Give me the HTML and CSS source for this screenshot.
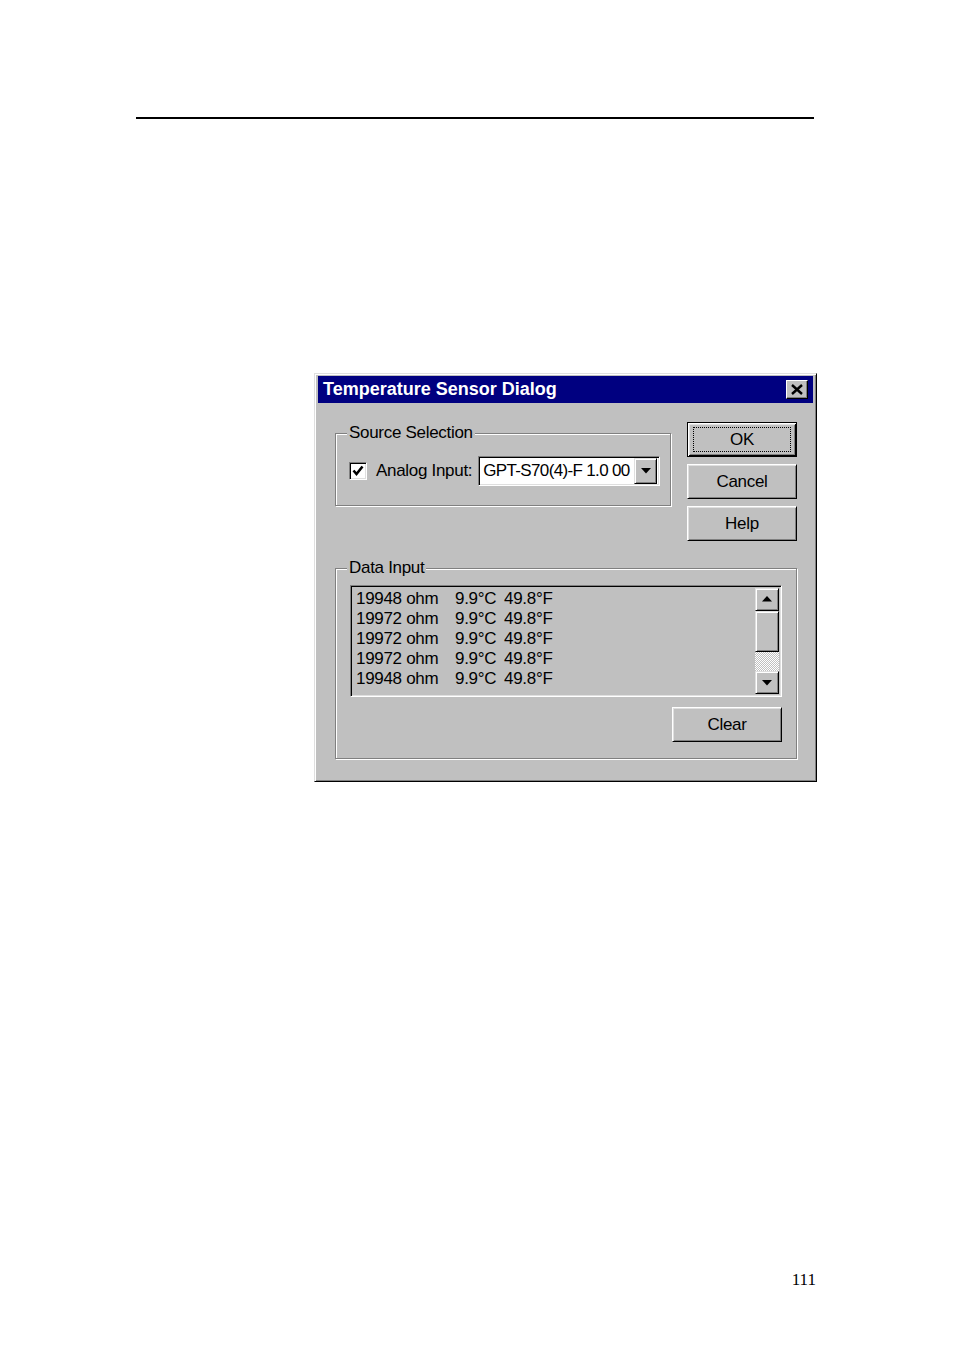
FILE: index.html
```html
<!DOCTYPE html>
<html>
<head>
<meta charset="utf-8">
<link rel="stylesheet" href="styles.css">
</head>
<body>
<div class="page">
  <div class="rule"></div>
  <div class="dialog">
    <div class="titlebar">
      <span class="title">Temperature Sensor Dialog</span>
      <span class="close"><svg width="12" height="11" viewBox="0 0 12 11"><path d="M1 1 L11 10 M11 1 L1 10" stroke="#000" stroke-width="2.4" fill="none"/></svg></span>
    </div>
    <div class="dlg-body">
      <div class="top-row">
        <fieldset class="group source">
          <legend>Source Selection</legend>
          <div class="src-row">
            <span class="checkbox"><svg width="14" height="14" viewBox="0 0 14 14"><path d="M2.5 6.5 L5.5 10 L11.5 2.5" stroke="#000" stroke-width="2.6" fill="none"/></svg></span>
            <span class="src-label">Analog Input:</span>
            <span class="combo">
              <span class="combo-text">GPT-S70(4)-F 1.0 00</span>
              <span class="combo-btn"><svg width="10" height="6" viewBox="0 0 10 6"><path d="M0 0 H10 L5 5.5 Z" fill="#000"/></svg></span>
            </span>
          </div>
        </fieldset>
        <div class="btn-col">
          <button class="btn default"><span class="focus">OK</span></button>
          <button class="btn">Cancel</button>
          <button class="btn">Help</button>
        </div>
      </div>
      <fieldset class="group data">
        <legend>Data Input</legend>
        <div class="listbox">
          <div class="rows">
            <div class="row"><span>19948 ohm</span><span>9.9°C</span><span>49.8°F</span></div>
            <div class="row"><span>19972 ohm</span><span>9.9°C</span><span>49.8°F</span></div>
            <div class="row"><span>19972 ohm</span><span>9.9°C</span><span>49.8°F</span></div>
            <div class="row"><span>19972 ohm</span><span>9.9°C</span><span>49.8°F</span></div>
            <div class="row"><span>19948 ohm</span><span>9.9°C</span><span>49.8°F</span></div>
          </div>
          <div class="scrollbar">
            <span class="sb-btn"><svg width="10" height="6" viewBox="0 0 10 6"><path d="M0 5.5 H10 L5 0 Z" fill="#000"/></svg></span>
            <span class="sb-thumb"></span>
            <span class="sb-track"></span>
            <span class="sb-btn"><svg width="10" height="6" viewBox="0 0 10 6"><path d="M0 0 H10 L5 5.5 Z" fill="#000"/></svg></span>
          </div>
        </div>
        <div class="clear-row">
          <button class="btn clear">Clear</button>
        </div>
      </fieldset>
    </div>
  </div>
  <div class="pagenum">111</div>
</div>
</body>
</html>
```

FILE: styles.css
```css
html, body {
  margin: 0;
  padding: 0;
  background: #fff;
}

.page {
  width: 954px;
  height: 1351px;
  overflow: hidden;
}

.rule {
  margin: 117px 0 0 136px;
  width: 678px;
  height: 2px;
  background: #000;
}

.dialog {
  box-sizing: border-box;
  margin: 254px 0 0 314px;
  width: 503px;
  height: 409px;
  background: #c0c0c0;
  border: 1px solid;
  border-color: #dfdfdf #000 #000 #dfdfdf;
  box-shadow: inset 1px 1px 0 #fff, inset -1px -1px 0 #808080;
  padding: 2px 3px 3px 3px;
  font-family: "Liberation Sans", Arial, sans-serif;
  font-size: 17px;
  letter-spacing: -0.3px;
  color: #000;
}

.titlebar {
  height: 27px;
  background: #000080;
  display: flex;
  align-items: center;
  justify-content: space-between;
  padding: 0 5px 0 5px;
}

.title {
  font-family: "Liberation Sans", Arial, sans-serif;
  font-weight: bold;
  font-size: 18px;
  color: #fff;
  letter-spacing: 0;
}

.close {
  box-sizing: border-box;
  width: 22px;
  height: 19px;
  background: #c0c0c0;
  border: 1px solid;
  border-color: #fff #000 #000 #fff;
  box-shadow: inset -1px -1px 0 #808080;
  display: flex;
  align-items: center;
  justify-content: center;
}

.dlg-body {
  padding: 19px 0 0 17px;
}

.top-row {
  display: flex;
  align-items: flex-start;
  gap: 16px;
}

.group {
  margin: 0;
  min-width: 0;
  border: 1px solid #808080;
  box-shadow: inset 1px 1px 0 #fff, 1px 1px 0 #fff;
}

.group legend {
  padding: 0 2px;
  line-height: 20px;
  background: #c0c0c0;
  position: relative;
}

.source {
  box-sizing: border-box;
  width: 336px;
  margin-top: 1px;
  padding: 13px 10px 19px 13px;
}

.source legend {
  margin-left: -2px;
}

.src-row {
  display: flex;
  align-items: center;
}

.checkbox {
  box-sizing: border-box;
  width: 18px;
  height: 18px;
  background: #fff;
  border: 1px solid;
  border-color: #808080 #fff #fff #808080;
  box-shadow: inset 1px 1px 0 #000, inset -1px -1px 0 #dfdfdf;
  display: flex;
  align-items: center;
  justify-content: center;
  margin-right: 9px;
}

.src-label {
  margin-right: 6px;
  white-space: nowrap;
}

.combo {
  box-sizing: border-box;
  width: 182px;
  height: 30px;
  background: #fff;
  border: 1px solid;
  border-color: #808080 #fff #fff #808080;
  box-shadow: inset 1px 1px 0 #000, inset -1px -1px 0 #dfdfdf;
  padding: 2px 2px 2px 4px;
  display: flex;
  align-items: center;
}

.combo-text {
  flex: 1;
  min-width: 0;
  white-space: nowrap;
  overflow: hidden;
  letter-spacing: -0.65px;
}

.combo-btn {
  flex: none;
  box-sizing: border-box;
  width: 23px;
  height: 26px;
  background: #c0c0c0;
  border: 1px solid;
  border-color: #dfdfdf #000 #000 #dfdfdf;
  box-shadow: inset 1px 1px 0 #fff, inset -1px -1px 0 #808080;
  display: flex;
  align-items: center;
  justify-content: center;
}

.btn-col {
  display: flex;
  flex-direction: column;
  gap: 7px;
}

.btn {
  box-sizing: border-box;
  width: 110px;
  height: 35px;
  margin: 0;
  padding: 0;
  background: #c0c0c0;
  border: 1px solid;
  border-color: #fff #000 #000 #fff;
  box-shadow: inset 1px 1px 0 #dfdfdf, inset -1px -1px 0 #808080;
  font-family: inherit;
  font-size: 17px;
  letter-spacing: -0.3px;
  color: #000;
  display: flex;
  align-items: center;
  justify-content: center;
}

.btn.default {
  border: 1px solid #000;
  box-shadow: inset 1px 1px 0 #fff, inset -1px -1px 0 #000, inset 2px 2px 0 #dfdfdf, inset -2px -2px 0 #808080;
  padding: 4px 5px;
}

.focus {
  box-sizing: border-box;
  width: 100%;
  height: 100%;
  border: 1px dotted #000;
  display: flex;
  align-items: center;
  justify-content: center;
}

.data {
  box-sizing: border-box;
  width: 462px;
  margin-top: 17px;
  padding: 7px 14px 16px 14px;
}

.data legend {
  margin-left: -3px;
}

.listbox {
  box-sizing: border-box;
  height: 112px;
  border: 1px solid;
  border-color: #808080 #fff #fff #808080;
  box-shadow: inset 1px 1px 0 #000, inset -1px -1px 0 #dfdfdf;
  padding: 2px 2px 2px 2px;
  display: flex;
}

.rows {
  flex: 1;
  padding: 1px 0 0 3px;
}

.row {
  display: grid;
  grid-template-columns: 99px 49px auto;
  line-height: 20px;
  height: 20px;
  white-space: nowrap;
}

.scrollbar {
  width: 24px;
  display: flex;
  flex-direction: column;
}

.sb-btn,
.sb-thumb {
  box-sizing: border-box;
  background: #c0c0c0;
  border: 1px solid;
  border-color: #dfdfdf #000 #000 #dfdfdf;
  box-shadow: inset 1px 1px 0 #fff, inset -1px -1px 0 #808080;
  display: flex;
  align-items: center;
  justify-content: center;
}

.sb-btn {
  height: 23px;
}

.sb-thumb {
  height: 42px;
}

.sb-track {
  height: 20px;
  background-color: #c0c0c0;
  background-image: repeating-conic-gradient(#ffffff 0 25%, #c0c0c0 0 50%);
  background-size: 2px 2px;
}

.clear-row {
  display: flex;
  justify-content: flex-end;
  margin-top: 10px;
}

.pagenum {
  margin-top: 488px;
  padding-right: 138px;
  text-align: right;
  font-family: "Liberation Serif", "Times New Roman", serif;
  font-size: 17px;
  line-height: 20px;
  color: #000;
}
```
